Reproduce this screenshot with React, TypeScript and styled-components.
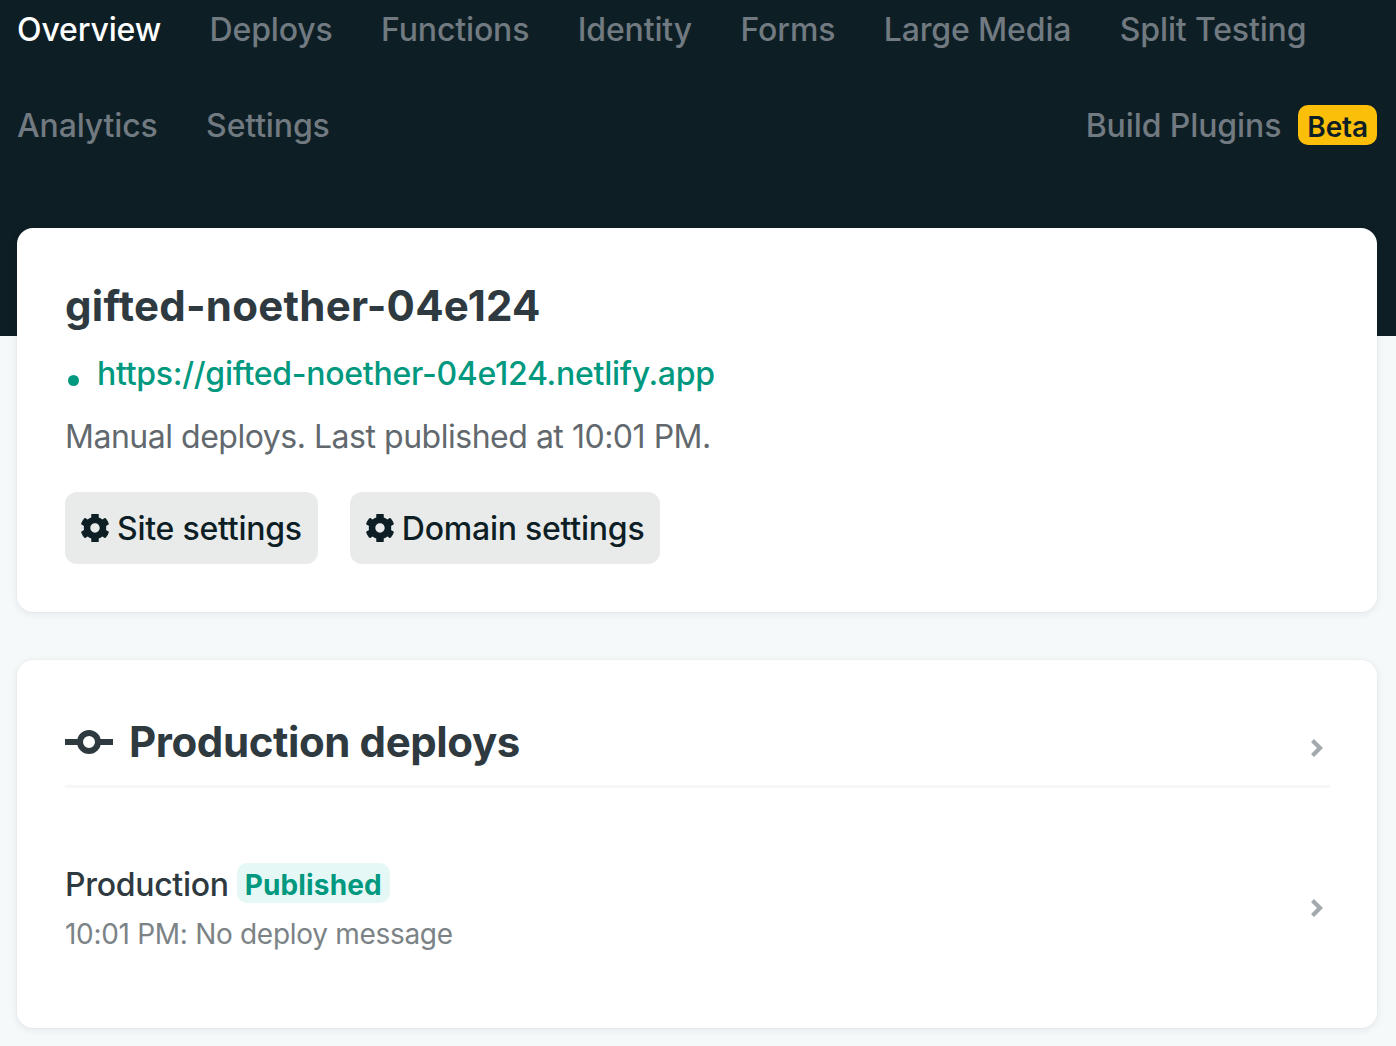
import React from "react";
import styled, { createGlobalStyle } from "styled-components";

const GlobalStyle = createGlobalStyle`
  html, body {
    margin: 0;
    padding: 0;
    background: #f6f9fa;
    font-family: "Inter", "Liberation Sans", sans-serif;
  }
`;

const Page = styled.div`
  width: 1396px;
  height: 1046px;
  overflow: hidden;
  background: linear-gradient(#0e1e25 336px, #f6f9fa 336px);
`;

const Nav = styled.nav`
  height: 228px;
  padding: 0 19px 0 17px;
  box-sizing: border-box;
`;

const NavRow = styled.div<{ $height: number }>`
  display: flex;
  align-items: center;
  height: ${(props) => props.$height}px;
`;

const NavItem = styled.a<{ $active?: boolean }>`
  font-size: 32px;
  font-weight: 500;
  line-height: 38px;
  letter-spacing: -0.15px;
  margin-right: 48.5px;
  color: ${(props) => (props.$active ? "#ffffff" : "#717a80")};
`;

const PluginsItem = styled.a`
  display: flex;
  align-items: center;
  margin: -1px 0 0 auto;
  gap: 17px;
  font-size: 32px;
  font-weight: 500;
  letter-spacing: -0.1px;
  color: #717a80;
`;

const BetaBadge = styled.span`
  display: block;
  height: 40px;
  line-height: 44px;
  padding: 0 9px;
  border-radius: 10px;
  background: #fbbf09;
  color: #0e1e25;
  font-size: 28px;
  font-weight: 600;
`;

const Main = styled.main`
  display: flex;
  flex-direction: column;
  gap: 48px;
  padding: 0 19px 0 17px;
`;

const Card = styled.section<{ $height: number }>`
  height: ${(props) => props.$height}px;
  box-sizing: border-box;
  padding: 0 47px 0 48px;
  background: #ffffff;
  border-radius: 16px;
  box-shadow: 0 0 0 1px rgba(14, 30, 37, 0.02), 0 2px 8px rgba(14, 30, 37, 0.08);
`;

const SiteName = styled.h1`
  margin: 0;
  padding-top: 52px;
  font-size: 42px;
  line-height: 52px;
  font-weight: 700;
  letter-spacing: 0.25px;
  color: #2e3a40;
`;

const UrlRow = styled.div`
  display: flex;
  align-items: center;
  margin-top: 17px;
  height: 48px;
`;

const Dot = styled.span`
  width: 11px;
  height: 11px;
  margin: 14px 18px 0 3px;
  border-radius: 50%;
  background: #00997f;
`;

const SiteUrl = styled.a`
  font-size: 32px;
  font-weight: 500;
  letter-spacing: -0.27px;
  color: #00997f;
`;

const Meta = styled.p`
  margin: 20px 0 0;
  font-size: 32px;
  line-height: 40px;
  letter-spacing: -0.48px;
  color: #62696e;
`;

const Actions = styled.div`
  display: flex;
  gap: 32px;
  margin-top: 35px;
`;

const ActionButton = styled.button`
  display: flex;
  align-items: center;
  gap: 8px;
  height: 72px;
  padding: 0 16px;
  border: 0;
  border-radius: 12px;
  background: #e9ebeb;
  color: #0e1e25;
  font-family: inherit;
  font-size: 32px;
  font-weight: 500;
  letter-spacing: -0.24px;
`;

const SectionHeader = styled.header`
  display: flex;
  align-items: center;
  justify-content: space-between;
  height: 128px;
  box-sizing: border-box;
  padding-top: 38px;
  border-bottom: 3px solid #f6f8f8;
`;

const SectionTitle = styled.h2`
  display: flex;
  align-items: center;
  gap: 16px;
  margin: 0;
  font-size: 42px;
  font-weight: 700;
  letter-spacing: -0.4px;
  color: #2e3a40;
`;

const DeployRow = styled.div`
  display: flex;
  align-items: center;
  justify-content: space-between;
  height: 240px;
`;

const DeployTitle = styled.div`
  display: flex;
  align-items: center;
  gap: 8px;
  height: 40px;
  font-size: 32px;
  font-weight: 500;
  letter-spacing: -0.3px;
  color: #2e3a40;
`;

const StatusBadge = styled.span`
  height: 40px;
  margin-bottom: 4px;
  line-height: 44px;
  padding: 0 8px;
  border-radius: 10px;
  background: #e6f8f6;
  color: #00997f;
  font-size: 28px;
  font-weight: 700;
  letter-spacing: 0.15px;
`;

const DeployMessage = styled.div`
  margin-top: 11px;
  font-size: 28px;
  line-height: 36px;
  letter-spacing: -0.3px;
  color: #7b8387;
`;

const ChevronSvg = styled.svg<{ $offset?: number }>`
  margin: ${(props) => props.$offset ?? 0}px 7px 0 0;
`;

const Chevron = ({ offset }: { offset?: number }) => (
  <ChevronSvg width="12" height="18" viewBox="0 0 12 18" $offset={offset}>
    <path d="M3 0 L12 9 L3 18 L0 15 L6 9 L0 3 Z" fill="#a3a9ac" />
  </ChevronSvg>
);

const Gear = () => (
  <svg width="28" height="28" viewBox="16 16 480 480" fill="#0e1e25">
    <path d="M487.4 315.7l-42.6-24.6c4.3-23.2 4.3-47 0-70.2l42.6-24.6c4.900-2.800 7.100-8.600 5.500-14-11.100-35.600-30-67.800-54.700-94.600-3.800-4.100-10-5.100-14.800-2.300L380.800 110c-17.900-15.400-38.500-27.300-60.800-35.100V25.800c0-5.600-3.900-10.500-9.400-11.700-36.700-8.200-74.300-7.800-109.200 0-5.500 1.200-9.400 6.100-9.400 11.700V75c-22.200 7.900-42.800 19.800-60.800 35.100L88.700 85.500c-4.900-2.800-11-1.900-14.800 2.300-24.700 26.700-43.600 58.900-54.700 94.600-1.700 5.400.6 11.200 5.500 14L67.300 221c-4.300 23.200-4.300 47 0 70.200l-42.600 24.600c-4.900 2.800-7.100 8.600-5.500 14 11.100 35.600 30 67.800 54.700 94.600 3.800 4.100 10 5.100 14.800 2.300l42.600-24.600c17.900 15.400 38.500 27.300 60.800 35.100v49.200c0 5.600 3.900 10.500 9.400 11.700 36.700 8.200 74.300 7.800 109.200 0 5.500-1.200 9.400-6.100 9.400-11.700v-49.200c22.200-7.900 42.800-19.800 60.800-35.100l42.600 24.600c4.900 2.800 11 1.900 14.800-2.300 24.700-26.700 43.600-58.900 54.700-94.600 1.500-5.500-.7-11.300-5.600-14.100zM256 336c-44.100 0-80-35.900-80-80s35.900-80 80-80 80 35.900 80 80-35.900 80-80 80z" />
  </svg>
);

const DeployIcon = () => (
  <svg width="48" height="24" viewBox="0 0 48 24" fill="none" stroke="#2e3a40" strokeWidth="6">
    <circle cx="24" cy="12" r="9" />
    <path d="M0 12h13M35 12h13" />
  </svg>
);

const navItems = ["Deploys", "Functions", "Identity", "Forms", "Large Media", "Split Testing"];

export default function App() {
  return (
    <Page>
      <GlobalStyle />
      <Nav>
        <NavRow $height={59}>
          <NavItem $active>Overview</NavItem>
          {navItems.map((item) => (
            <NavItem key={item}>{item}</NavItem>
          ))}
        </NavRow>
        <NavRow $height={133}>
          <NavItem>Analytics</NavItem>
          <NavItem>Settings</NavItem>
          <PluginsItem>
            Build Plugins
            <BetaBadge>Beta</BetaBadge>
          </PluginsItem>
        </NavRow>
      </Nav>
      <Main>
        <Card $height={384}>
          <SiteName>gifted-noether-04e124</SiteName>
          <UrlRow>
            <Dot />
            <SiteUrl>https://gifted-noether-04e124.netlify.app</SiteUrl>
          </UrlRow>
          <Meta>Manual deploys. Last published at 10:01 PM.</Meta>
          <Actions>
            <ActionButton>
              <Gear />
              Site settings
            </ActionButton>
            <ActionButton>
              <Gear />
              Domain settings
            </ActionButton>
          </Actions>
        </Card>
        <Card $height={368}>
          <SectionHeader>
            <SectionTitle>
              <DeployIcon />
              Production deploys
            </SectionTitle>
            <Chevron offset={12} />
          </SectionHeader>
          <DeployRow>
            <div>
              <DeployTitle>
                Production
                <StatusBadge>Published</StatusBadge>
              </DeployTitle>
              <DeployMessage>10:01 PM: No deploy message</DeployMessage>
            </div>
            <Chevron />
          </DeployRow>
        </Card>
      </Main>
    </Page>
  );
}
